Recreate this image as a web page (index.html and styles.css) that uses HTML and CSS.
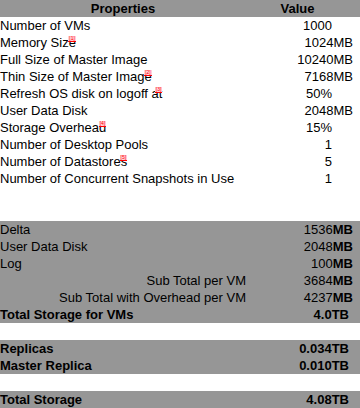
FILE: index.html
```html
<!DOCTYPE html>
<html>
<head>
<meta charset="utf-8">
<link rel="stylesheet" href="styles.css">
</head>
<body>
<div class="sheet">
  <div class="row head"><div class="c1 center">Properties</div><div class="c2 center-v">Value</div></div>

  <div class="row"><div class="c1">Number of VMs</div><div class="c2 num">1000</div></div>
  <div class="row"><div class="c1">Memory Si<span class="anchor">ze<span class="mark">[1]</span></span></div><div class="c2 mb">1024MB</div></div>
  <div class="row"><div class="c1">Full Size of Master Image</div><div class="c2 mb">10240MB</div></div>
  <div class="row"><div class="c1">Thin Size of Master Ima<span class="anchor">ge<span class="mark">[2]</span></span></div><div class="c2 mb">7168MB</div></div>
  <div class="row"><div class="c1">Refresh OS disk on logoff <span class="anchor">at<span class="mark">[3]</span></span></div><div class="c2 num">50%</div></div>
  <div class="row"><div class="c1">User Data Disk</div><div class="c2 mb">2048MB</div></div>
  <div class="row"><div class="c1">Storage Overhe<span class="anchor">ad<span class="mark">[4]</span></span></div><div class="c2 num">15%</div></div>
  <div class="row"><div class="c1">Number of Desktop Pools</div><div class="c2 num">1</div></div>
  <div class="row"><div class="c1">Number of Datasto<span class="anchor">res<span class="mark">[5]</span></span></div><div class="c2 num">5</div></div>
  <div class="row"><div class="c1 wide">Number of Concurrent Snapshots in Use</div><div class="c2 num">1</div></div>

  <div class="row blank"></div>
  <div class="row blank"></div>

  <div class="row gray"><div class="c1">Delta</div><div class="c2 mb">1536<b>MB</b></div></div>
  <div class="row gray"><div class="c1">User Data Disk</div><div class="c2 mb">2048<b>MB</b></div></div>
  <div class="row gray"><div class="c1">Log</div><div class="c2 mb">100<b>MB</b></div></div>
  <div class="row gray"><div class="c1 right">Sub Total per VM</div><div class="c2 mb">3684<b>MB</b></div></div>
  <div class="row gray"><div class="c1 right">Sub Total with Overhead per VM</div><div class="c2 mb">4237<b>MB</b></div></div>
  <div class="row gray bold"><div class="c1">Total Storage for VMs</div><div class="c2 tb">4.0TB</div></div>

  <div class="row blank"></div>

  <div class="row gray bold"><div class="c1">Replicas</div><div class="c2 tb">0.034TB</div></div>
  <div class="row gray bold"><div class="c1">Master Replica</div><div class="c2 tb">0.010TB</div></div>

  <div class="row blank"></div>

  <div class="row gray bold"><div class="c1">Total Storage</div><div class="c2 tb">4.08TB</div></div>
</div>
</body>
</html>
```

FILE: styles.css
```css
html, body {
  margin: 0;
  padding: 0;
  background: #ffffff;
}

.sheet {
  width: 360px;
  font-family: "Liberation Sans", Arial, sans-serif;
  font-size: 13px;
  line-height: 17px;
  color: #000000;
}

.row {
  display: grid;
  grid-template-columns: 246px 1fr;
  height: 17px;
  white-space: nowrap;
}

.head {
  background: #969696;
  font-weight: bold;
}

.gray {
  background: #969696;
}

.bold {
  font-weight: bold;
}

.c1 {
  text-align: left;
}

.c1.center {
  text-align: center;
}

.c1.right {
  text-align: right;
}

.c2 {
  text-align: right;
}

.c2.center-v {
  text-align: center;
  padding-right: 11px;
}

.c2.num {
  padding-right: 28px;
}

.c2.mb {
  padding-right: 7px;
}

.c2.tb {
  padding-right: 11px;
}

.anchor {
  position: relative;
}

.mark {
  position: absolute;
  right: 0;
  top: 1px;
  font-size: 5px;
  line-height: 5px;
  color: #ff0000;
  background: #ffd0d8;
  border-bottom: 1px solid #ff0000;
  padding: 0 1px;
  font-weight: normal;
}
```
